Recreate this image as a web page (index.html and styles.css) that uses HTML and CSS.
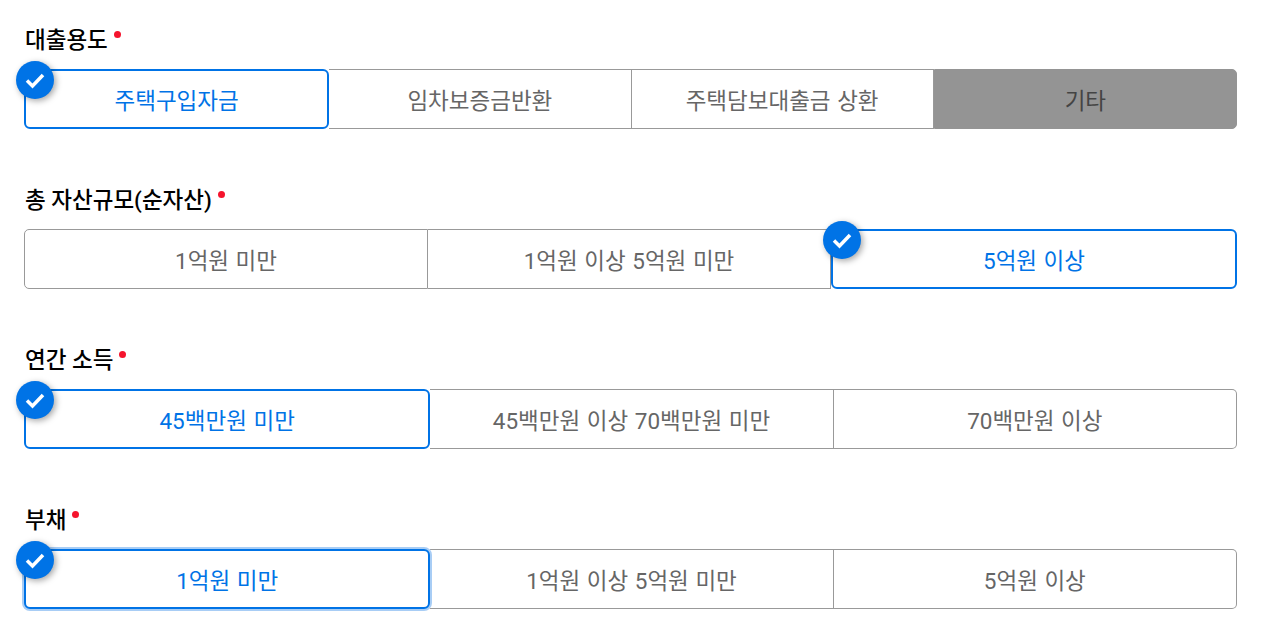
FILE: index.html
```html
<!DOCTYPE html>
<html lang="ko">
<head>
  <meta charset="UTF-8">
  <title>대출 정보</title>
  <link rel="stylesheet" href="styles.css">
</head>
<body>
  <form class="loan-form">
    <div class="field">
      <div class="field-label">대출용도<span class="required"></span></div>
      <div class="options">
        <div class="option selected"><span class="check"><svg viewBox="0 0 38 38"><path d="M11 19.500l5.500 5.500 10.500-11"/></svg></span>주택구입자금</div>
        <div class="option">임차보증금반환</div>
        <div class="option">주택담보대출금 상환</div>
        <div class="option disabled">기타</div>
      </div>
    </div>
    <div class="field">
      <div class="field-label">총 자산규모(순자산)<span class="required"></span></div>
      <div class="options">
        <div class="option">1억원 미만</div>
        <div class="option">1억원 이상 5억원 미만</div>
        <div class="option selected"><span class="check"><svg viewBox="0 0 38 38"><path d="M11 19.500l5.500 5.500 10.500-11"/></svg></span>5억원 이상</div>
      </div>
    </div>
    <div class="field">
      <div class="field-label">연간 소득<span class="required"></span></div>
      <div class="options">
        <div class="option selected"><span class="check"><svg viewBox="0 0 38 38"><path d="M11 19.500l5.500 5.500 10.500-11"/></svg></span>45백만원 미만</div>
        <div class="option">45백만원 이상 70백만원 미만</div>
        <div class="option">70백만원 이상</div>
      </div>
    </div>
    <div class="field">
      <div class="field-label">부채<span class="required"></span></div>
      <div class="options">
        <div class="option selected focused"><span class="check"><svg viewBox="0 0 38 38"><path d="M11 19.500l5.500 5.500 10.500-11"/></svg></span>1억원 미만</div>
        <div class="option">1억원 이상 5억원 미만</div>
        <div class="option">5억원 이상</div>
      </div>
    </div>
  </form>
</body>
</html>
```

FILE: styles.css
```css
html, body {
  height: 100%;
}
body {
  margin: 0;
  background: #fff;
  font-family: Roboto, "Noto Sans CJK KR", sans-serif;
  overflow: hidden;
}
.loan-form {
  padding: 24px 34px 0 24px;
}
.field {
  margin-bottom: 55px;
}
.field-label {
  display: flex;
  height: 30px;
  line-height: 32px;
  margin-bottom: 15px;
  font-size: 22.5px;
  font-weight: 500;
  color: #000;
  padding-left: 1px;
}
.required {
  width: 7px;
  height: 7px;
  margin: 7px 0 0 6px;
  border-radius: 50%;
  background: #f5142d;
}
.options {
  display: flex;
}
.option {
  position: relative;
  flex: 1 1 0;
  box-sizing: border-box;
  height: 60px;
  display: flex;
  align-items: center;
  justify-content: center;
  border: 1px solid #999;
  border-left: 0;
  font-size: 22.5px;
  word-spacing: 1px;
  color: #666;
  background: #fff;
}
.option:first-child {
  border-left: 1px solid #999;
  border-radius: 5px 0 0 5px;
}
.option:last-child {
  border-radius: 0 5px 5px 0;
}
.option.selected {
  z-index: 1;
  border: 2px solid #0073e6;
  border-radius: 6px;
  color: #0073e6;
}
.option.focused {
  box-shadow: 0 0 0 2px #a8cdf5;
}
.option.disabled {
  background: #949494;
  border: 1px solid #949494;
  color: #444;
}
.check {
  position: absolute;
  left: -10px;
  top: -10px;
  width: 38px;
  height: 38px;
  border-radius: 50%;
  background: #0073e6;
  box-shadow: 2px 2px 6px rgba(0, 0, 0, 0.35);
}
.check svg {
  display: block;
  width: 38px;
  height: 38px;
  fill: none;
  stroke: #fff;
  stroke-width: 3.5;
}
```
